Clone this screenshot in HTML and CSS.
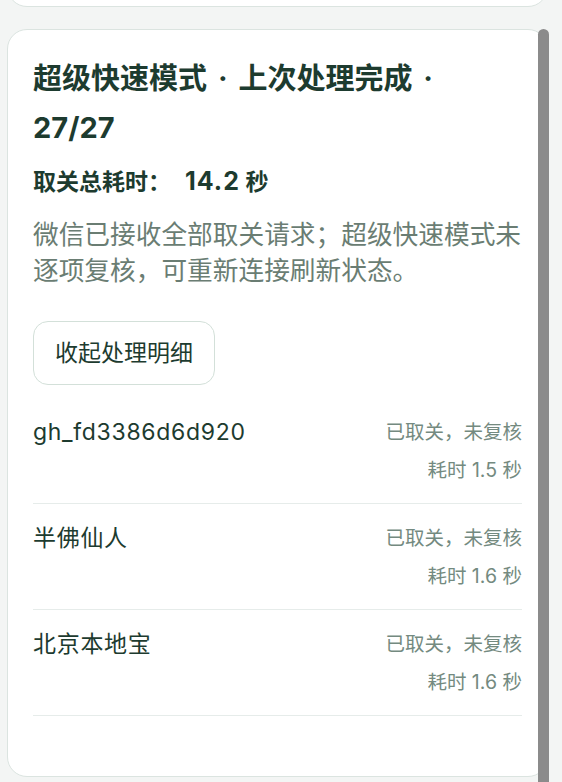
FILE: index.html
```html
<!DOCTYPE html>
<html lang="zh-CN">
<head>
<meta charset="utf-8">
<title>处理结果</title>
<link rel="stylesheet" href="styles.css">
</head>
<body>
<div class="page">
  <div class="card card-prev"></div>
  <section class="card card-main">
    <h2 class="title">超级快速模式&nbsp;<span class="dot">·</span> 上次处理完成&nbsp;<span class="dot">·</span> 27/27</h2>
    <p class="total">取关总耗时：<span class="num">14.2</span> 秒</p>
    <p class="desc">微信已接收全部取关请求；超级快速模式未逐项复核，可重新连接刷新状态。</p>
    <button class="toggle" type="button">收起处理明细</button>
    <ul class="rows">
      <li class="row">
        <span class="name">gh_fd3386d6d920</span>
        <span class="meta"><span class="status">已取关，未复核</span><span class="time">耗时 1.5 秒</span></span>
      </li>
      <li class="row">
        <span class="name">半佛仙人</span>
        <span class="meta"><span class="status">已取关，未复核</span><span class="time">耗时 1.6 秒</span></span>
      </li>
      <li class="row">
        <span class="name">北京本地宝</span>
        <span class="meta"><span class="status">已取关，未复核</span><span class="time">耗时 1.6 秒</span></span>
      </li>
    </ul>
  </section>
  <div class="scrollbar"></div>
</div>
</body>
</html>
```
FILE: styles.css
```css
* { box-sizing: border-box; }
html, body { margin: 0; padding: 0; }
body {
  background: #f3f5f4;
  font-family: "Inter", "Noto Sans CJK SC", sans-serif;
  color: #1d3b2f;
  overflow: hidden;
}
.page {
  position: relative;
  padding: 0 14px 0 7px;
  display: flex;
  flex-direction: column;
  gap: 22px;
  height: 782px;
}
.card {
  background: #ffffff;
  border: 1.5px solid #dbe4e0;
  border-radius: 20px;
}
.card-prev {
  height: 60px;
  margin-top: -53px;
  flex: none;
}
.card-main {
  padding: 24px 25px 24px 25px;
  flex: none;
}
.title {
  margin: 0;
  max-width: 470px;
  font-size: 29px;
  line-height: 49px;
  font-weight: 700;
  color: #1d3b2f;
}
.dot {
  margin: 0 4px;
}
.total {
  margin: 13px 0 0;
  font-size: 23px;
  line-height: 32px;
  font-weight: 700;
  color: #1d3b2f;
}
.total .num {
  margin-left: 14px;
  font-size: 25px;
  letter-spacing: 1px;
}
.desc {
  margin: 19px 0 0;
  font-size: 25.7px;
  line-height: 36px;
  color: #6a7d73;
}
.toggle {
  display: flex;
  align-items: center;
  height: 64px;
  margin-top: 32px;
  padding: 0 21px;
  font-family: inherit;
  font-size: 23px;
  line-height: 32px;
  color: #1d3b2f;
  background: #ffffff;
  border: 1.5px solid #d3e0d9;
  border-radius: 15px;
}
.rows {
  list-style: none;
  margin: 33px 0 36px;
  padding: 0;
}
.row {
  display: flex;
  justify-content: space-between;
  align-items: flex-start;
  padding: 0 0 18.5px;
  border-bottom: 1.5px solid #e6ecea;
}
.row + .row {
  padding-top: 20.5px;
}
.name {
  font-size: 23px;
  line-height: 28px;
  letter-spacing: 0.7px;
  color: #1d3b2f;
}
.meta {
  display: flex;
  flex-direction: column;
  align-items: flex-end;
  gap: 10px;
}
.status, .time {
  font-size: 19.5px;
  line-height: 28px;
  color: #748a80;
}
.scrollbar {
  position: absolute;
  left: 538px;
  top: 29px;
  width: 11px;
  height: 760px;
  background: #8b8b8b;
  border-radius: 6px 6px 0 0;
}
```
